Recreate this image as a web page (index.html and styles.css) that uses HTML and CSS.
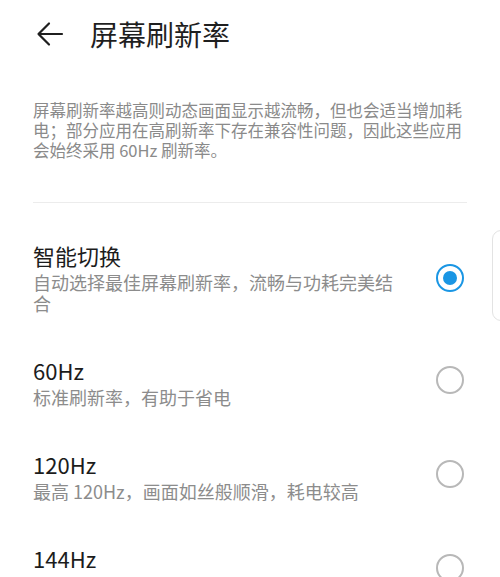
FILE: index.html
```html
<!DOCTYPE html>
<html lang="zh-CN">
<head>
<meta charset="utf-8">
<link rel="stylesheet" href="styles.css">
</head>
<body>
<div class="page">
  <header class="header">
    <svg class="back" width="28" height="26" viewBox="0 0 28 26" aria-hidden="true">
      <path d="M26 13H2.5M13 2.5L2.5 13L13 23.5" fill="none" stroke="#1f1f1f" stroke-width="2.2" stroke-linecap="round" stroke-linejoin="round"/>
    </svg>
    <h1 class="title">屏幕刷新率</h1>
  </header>
  <p class="desc">屏幕刷新率越高则动态画面显示越流畅，但也会适当增加耗电；部分应用在高刷新率下存在兼容性问题，因此这些应用会始终采用 60Hz 刷新率。</p>
  <div class="divider"></div>
  <ul class="options">
    <li class="option">
      <div class="text">
        <div class="name">智能切换</div>
        <div class="sub">自动选择最佳屏幕刷新率，流畅与功耗完美结合</div>
      </div>
      <span class="radio checked"></span>
    </li>
    <li class="option">
      <div class="text">
        <div class="name">60Hz</div>
        <div class="sub">标准刷新率，有助于省电</div>
      </div>
      <span class="radio"></span>
    </li>
    <li class="option">
      <div class="text">
        <div class="name">120Hz</div>
        <div class="sub">最高 120Hz，画面如丝般顺滑，耗电较高</div>
      </div>
      <span class="radio"></span>
    </li>
    <li class="option">
      <div class="text">
        <div class="name">144Hz</div>
        <div class="sub">最高 144Hz，画面极致流畅，耗电较高</div>
      </div>
      <span class="radio"></span>
    </li>
  </ul>
  <div class="edge-handle"></div>
</div>
</body>
</html>
```
FILE: styles.css
```css
* { box-sizing: border-box; }
html, body {
  margin: 0;
  padding: 0;
  background: #ffffff;
}
body {
  font-family: "Noto Sans CJK SC", "Noto Sans", sans-serif;
  width: 500px;
  height: 577px;
  overflow: hidden;
}
.page {
  position: relative;
  height: 577px;
  overflow: hidden;
}
.header {
  height: 68px;
  display: flex;
  align-items: center;
  padding-left: 36px;
}
.back {
  display: block;
  margin-top: 0;
}
.title {
  margin: 0 0 0 26px;
  font-size: 28px;
  font-weight: 400;
  line-height: 40px;
  color: #1f1f1f;
}
.desc {
  margin: 32px 0 0;
  padding: 0 33px;
  font-size: 16.5px;
  line-height: 20px;
  color: #8a8a8a;
}
.divider {
  margin: 42px 33px 0;
  height: 1px;
  background: #ececec;
}
.options {
  list-style: none;
  margin: 17px 0 0;
  padding: 0;
}
.option {
  display: flex;
  align-items: center;
  padding: 21px 36px 21px 33px;
}
.text {
  width: 370px;
  margin-right: 33px;
}
.name {
  font-size: 22px;
  line-height: 28px;
  color: #1c1c1c;
}
.sub {
  margin-top: 3px;
  font-size: 18px;
  line-height: 21px;
  color: #8c8c8c;
}
.radio {
  flex: none;
  width: 28px;
  height: 28px;
  border-radius: 50%;
  border: 2px solid #b8b8b8;
  margin-top: -4px;
  display: flex;
  align-items: center;
  justify-content: center;
}
.radio.checked {
  border: 2.5px solid #1a96e4;
  margin-top: 0;
}
.radio.checked::after {
  content: "";
  width: 14px;
  height: 14px;
  border-radius: 50%;
  background: #1a96e4;
}
.edge-handle {
  position: absolute;
  left: 492px;
  top: 230px;
  width: 24px;
  height: 91px;
  border: 1px solid #e3e3e3;
  border-radius: 9px;
  background: #fff;
}
```
